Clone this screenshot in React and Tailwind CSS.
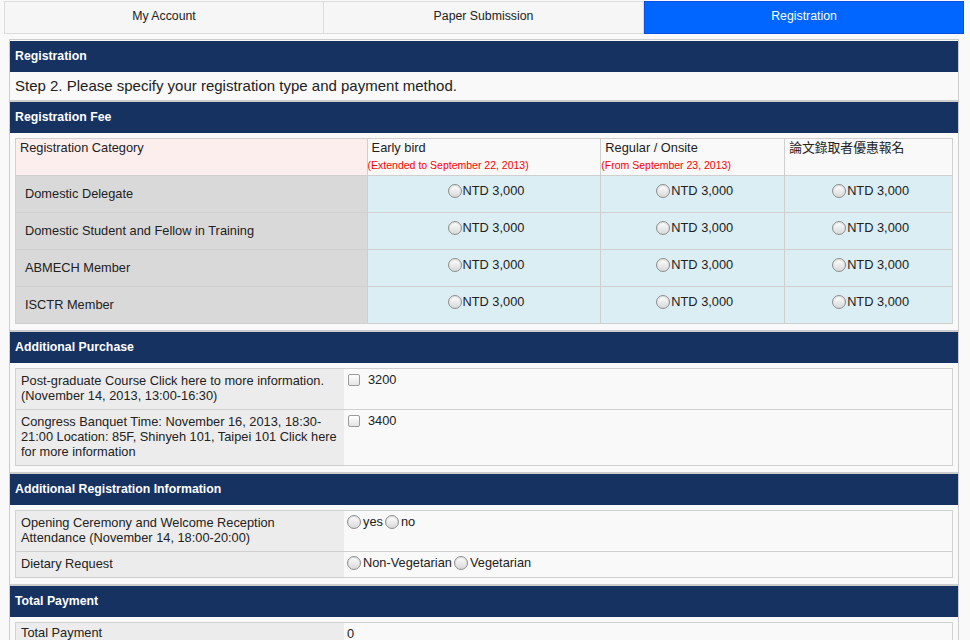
import React from 'react'

const FEES = [
  'Domestic Delegate',
  'Domestic Student and Fellow in Training',
  'ABMECH Member',
  'ISCTR Member',
]

function Radio() {
  return (
    <span className="inline-block w-[14px] h-[14px] shrink-0 rounded-full border border-[#8e8e8e] bg-linear-to-b from-[#ffffff] to-[#d8d8d8] shadow-[inset_0_1px_1px_rgba(0,0,0,0.15)]" />
  )
}

function Checkbox() {
  return (
    <span className="inline-block w-[12px] h-[12px] shrink-0 rounded-[2px] border border-[#9a9a9a] bg-linear-to-b from-[#ffffff] to-[#e4e4e4]" />
  )
}

function SectionHeader({ children }) {
  return (
    <div className="h-[31px] bg-[#163261] text-white text-[12.3px] font-bold flex items-center px-[5px]">
      {children}
    </div>
  )
}

function Section({ title, children }) {
  return (
    <div className="border-b-2 border-[#cdcdcd]">
      <SectionHeader>{title}</SectionHeader>
      {children}
    </div>
  )
}

function InfoRow({ label, children, h, pt = 'pt-[4px]' }) {
  return (
    <div className={`flex border border-[#cfcfcf] -mt-px first:mt-0 ${h}`}>
      <div className={`w-[328px] shrink-0 bg-[#ececec] px-[5px] ${pt} text-[12.8px] leading-[15px] text-[#222]`}>{label}</div>
      <div className="flex-1 bg-[#f9f9f9] pl-[3px] pt-[3px] text-[12.8px] leading-[15px] text-[#222]">{children}</div>
    </div>
  )
}

export default function App() {
  return (
    <div className="min-h-screen bg-[#f9f9f9] font-['Liberation_Sans',Arial,sans-serif] text-[#222] pt-px">
      {/* top tabs */}
      <div className="ml-[4px] w-[960px] h-[33px] flex text-[12.3px]">
        <div className="w-[320px] flex items-center justify-center pb-[2px] border border-[#dcdcdc] bg-[#f6f6f6]">My Account</div>
        <div className="w-[320px] flex items-center justify-center pb-[2px] border border-l-0 border-[#dcdcdc] bg-[#f6f6f6]">Paper Submission</div>
        <div className="w-[320px] flex items-center justify-center pb-[2px] border border-[#0a4fe6] bg-[#0066ff] text-white">Registration</div>
      </div>

      <div className="mt-[5px] ml-[9px] w-[950px] border border-[#cdcdcd] pt-px">
        <Section title="Registration">
          <div className="h-[28px] flex items-center px-[5px] text-[15px] text-[#222] bg-[#f9f9f9]">
            Step 2. Please specify your registration type and payment method.
          </div>
        </Section>

        <Section title="Registration Fee">
          <div className="p-[5px] pb-[6px]">
            <table className="w-[938px] border-collapse text-[12.8px] text-[#222]">
              <colgroup>
                <col className="w-[352px]" />
                <col className="w-[234px]" />
                <col className="w-[184px]" />
                <col className="w-[168px]" />
              </colgroup>
              <thead>
                <tr className="h-[37px]">
                  <th className="border border-[#cfcfcf] bg-[#fdeeee] font-normal text-left align-top pl-[4px] pt-0 leading-[17px]">Registration Category</th>
                  <th className="border border-[#cfcfcf] bg-[#f9f9f9] font-normal text-left align-top pt-0">
                    <div className="pl-[4px] leading-[17px]">Early bird</div>
                    <div className="text-[10.5px] text-[#ff0000] leading-[13px] mt-[3px]">(Extended to September 22, 2013)</div>
                  </th>
                  <th className="border border-[#cfcfcf] bg-[#f9f9f9] font-normal text-left align-top pt-0">
                    <div className="pl-[4px] leading-[17px]">Regular / Onsite</div>
                    <div className="text-[10.5px] text-[#ff0000] leading-[13px] mt-[3px]">(From September 23, 2013)</div>
                  </th>
                  <th className="border border-[#cfcfcf] bg-[#f9f9f9] font-normal text-left align-top pl-[4px] pt-0 leading-[17px] font-['Liberation_Sans','Noto_Sans_CJK_TC',sans-serif]">論文錄取者優惠報名</th>
                </tr>
              </thead>
              <tbody>
                {FEES.map(name => (
                  <tr key={name} className="h-[37px]">
                    <td className="border border-[#cfcfcf] bg-[#d9d9d9] pl-[9px] align-middle">{name}</td>
                    {[0, 1, 2].map(i => (
                      <td key={i} className="border border-[#cfcfcf] bg-[#dbeef3] align-top pt-[5px]">
                        <div className="flex items-center justify-center gap-[1px] pl-[4px]">
                          <Radio />
                          <span>NTD 3,000</span>
                        </div>
                      </td>
                    ))}
                  </tr>
                ))}
              </tbody>
            </table>
          </div>
        </Section>

        <Section title="Additional Purchase">
          <div className="p-[5px] pb-[6px]">
            <InfoRow h="h-[42px]" label={<>Post-graduate Course Click here to more information.<br />(November 14, 2013, 13:00-16:30)</>}>
              <div className="flex items-center gap-[8px] pl-[1px]"><Checkbox /><span>3200</span></div>
            </InfoRow>
            <InfoRow h="h-[57px]" label={<>Congress Banquet Time: November 16, 2013, 18:30-<br />21:00 Location: 85F, Shinyeh 101, Taipei 101 Click here<br />for more information</>}>
              <div className="flex items-center gap-[8px] pl-[1px]"><Checkbox /><span>3400</span></div>
            </InfoRow>
          </div>
        </Section>

        <Section title="Additional Registration Information">
          <div className="p-[5px] pb-[6px]">
            <InfoRow h="h-[42px]" label={<>Opening Ceremony and Welcome Reception<br />Attendance (November 14, 18:00-20:00)</>}>
              <div className="flex items-center gap-[2px]"><Radio /><span>yes</span><Radio /><span>no</span></div>
            </InfoRow>
            <InfoRow h="h-[27px]" label="Dietary Request">
              <div className="flex items-center gap-[2px]"><Radio /><span>Non-Vegetarian</span><Radio /><span>Vegetarian</span></div>
            </InfoRow>
          </div>
        </Section>

        <div>
          <SectionHeader>Total Payment</SectionHeader>
          <div className="p-[5px]">
            <InfoRow h="h-[30px]" pt="pt-[2px]" label="Total Payment">
              <span>0</span>
            </InfoRow>
          </div>
        </div>
      </div>
    </div>
  )
}
